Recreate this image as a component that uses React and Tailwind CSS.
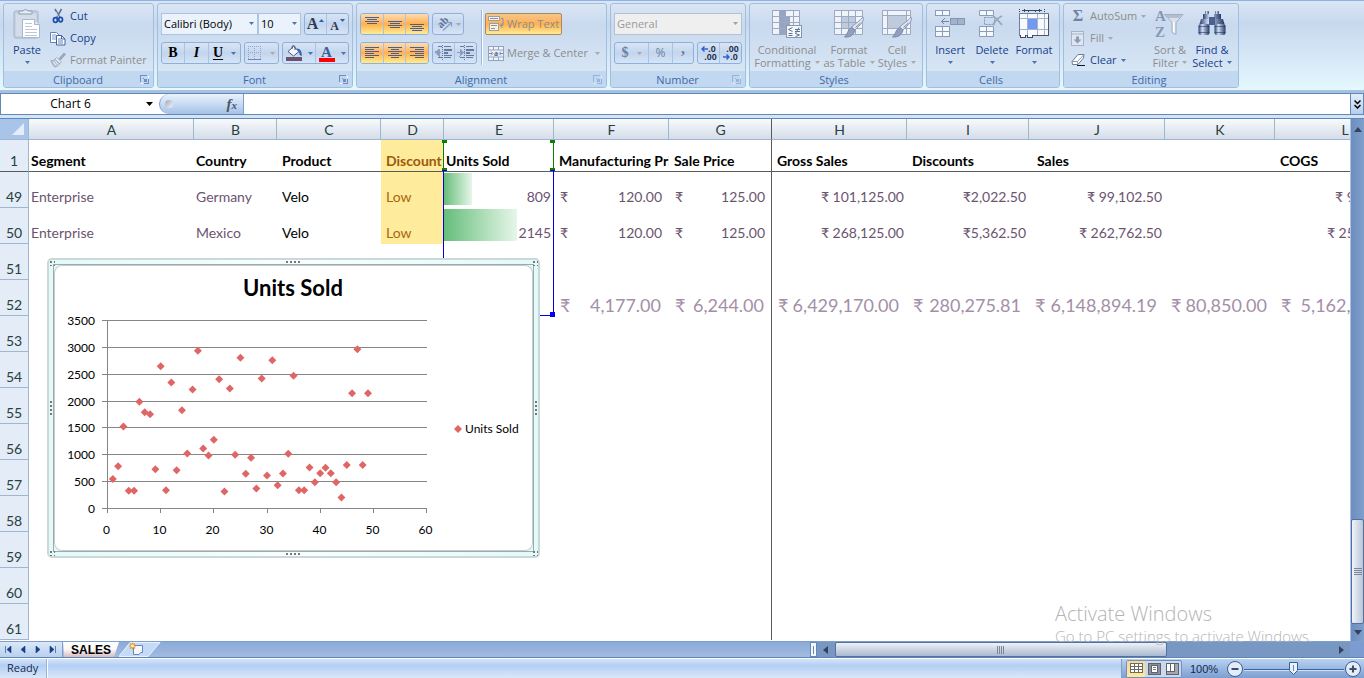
import React from "react";

const UI = "font-['Open_Sans','Noto_Sans',sans-serif]";
const SHEET = "font-['Lato','Noto_Sans',sans-serif]";
const SERIF = "font-['Liberation_Serif',serif]";

const BOX =
  "flex h-[22px] overflow-hidden rounded-[3px] border border-[#8eb0dc] bg-linear-to-b from-[#d9e5f4] via-[#c3d5ed] to-[#d6e4f6]";
const SEG = "flex items-center justify-center border-l border-[#a9c3e6] first:border-l-0";
const HOT = "bg-linear-to-b from-[#fddcae] via-[#ffb04e] to-[#ffec92]";

function Arrow({ className = "text-[#4a73b5]" }) {
  return (
    <svg width="5" height="3" viewBox="0 0 5 3" className={className} aria-hidden="true">
      <path d="M0 0h5L2.5 3z" fill="currentColor" />
    </svg>
  );
}

/* ---------- Icons ---------- */

function PasteIcon() {
  return (
    <svg width="28" height="32" viewBox="0 0 28 32">
      <rect x="1" y="3" width="24" height="27" rx="2" fill="#c6d1e1" stroke="#a3b2c8" />
      <rect x="3" y="6" width="20" height="22" fill="#d3dce9" />
      <path d="M6 6V3h4a3 3 0 0 1 5 0h4v3z" fill="#e6ebf3" stroke="#8f9db4" />
      <path d="M9.500 11.500h12l5 5v13h-17z" fill="#fff" stroke="#a9b7cd" />
      <path d="M21.500 11.500v5h5" fill="#dde4ef" stroke="#a9b7cd" />
      <path d="M12 15.500h7M12 18.500h7M12 21.500h12M12 24.500h12M12 27.500h12" stroke="#bcc7d8" />
    </svg>
  );
}

function CutIcon() {
  return (
    <svg width="16" height="16" viewBox="0 0 16 16">
      <path d="M5 1l5 9M11.500 1L6.500 10" stroke="#5d7396" strokeWidth="1.600" fill="none" />
      <path d="M6 4l2.500 5" stroke="#fff" strokeWidth=".6" />
      <ellipse cx="5.400" cy="12" rx="2" ry="2.400" fill="none" stroke="#1f4fae" strokeWidth="1.700" />
      <ellipse cx="10.600" cy="11.600" rx="1.900" ry="2.300" fill="none" stroke="#1f4fae" strokeWidth="1.700" />
    </svg>
  );
}

function CopyIcon() {
  return (
    <svg width="16" height="16" viewBox="0 0 16 16">
      <path d="M.5 2.500h6l3 3v7h-9z" fill="#fff" stroke="#5f83bd" />
      <path d="M2 5h4M2 7h5M2 9h4" stroke="#7b9cd0" />
      <path d="M6.500 5.500h5l3.500 3.500v6h-8.500z" fill="#fff" stroke="#3e64a6" />
      <path d="M11.500 5.500v3.500h3.500" fill="none" stroke="#3e64a6" />
      <path d="M8 9h3M8 11h5M8 13h5" stroke="#5f83bd" />
    </svg>
  );
}

function PainterIcon() {
  return (
    <svg width="16" height="16" viewBox="0 0 16 16">
      <path d="M15 1.500L9.500 7.500" stroke="#9aa7bc" strokeWidth="2.600" />
      <path d="M6.500 5.500l5 4.500-2 2-5-4.500z" fill="#e9edf3" stroke="#a3b0c4" />
      <path d="M1 8.500c2 .5 3-.5 4-1l4.500 4c-1 2-2.500 3-4.500 3.500-2-1-3-3.500-4-6.500z" fill="#b7c3d6" stroke="#98a6bc" />
      <path d="M3 9.500l3 4M5 8.500l3 4" stroke="#eef2f8" />
    </svg>
  );
}

function BorderIcon() {
  return (
    <svg width="14" height="14" viewBox="0 0 14 14" shapeRendering="crispEdges">
      <path d="M.5 0v13M6.500 0v13M12.500 0v13M0 .5h13M0 6.500h13" stroke="#93a6c6" strokeDasharray="1 1" />
      <path d="M0 13.500h13" stroke="#7589ad" />
    </svg>
  );
}

function FillIcon() {
  return (
    <svg width="18" height="16" viewBox="0 0 18 16">
      <path d="M2 6.500L7.500 1.500l5.500 5-5.500 4.500z" fill="#f3f7fc" stroke="#44597f" />
      <path d="M6 4V1.500q1.500-2 3 0V5" fill="none" stroke="#44597f" />
      <path d="M10.500 3.500q5-.5 5.500 7-2 .5-2.500-1 0-3-3-6z" fill="#2f62b8" />
      <rect x="0" y="12" width="16" height="4" fill="#6d5270" />
    </svg>
  );
}

function AlignIcon({ kind }) {
  const rows = {
    top: { y: 0, x: [1, 3, 1, 3], w: [14, 10, 14, 10] },
    mid: { y: 4, x: [1, 3, 1, 3], w: [14, 10, 14, 10] },
    bot: { y: 7, x: [1, 3, 1, 3], w: [14, 10, 14, 10] },
    left: { y: 1, x: [1, 1, 1, 1, 1, 1], w: [14, 9, 14, 9, 14, 9] },
    center: { y: 1, x: [1, 4, 1, 4, 1, 4], w: [14, 8, 14, 8, 14, 8] },
    right: { y: 1, x: [1, 6, 1, 6, 1, 6], w: [14, 9, 14, 9, 14, 9] },
  }[kind];
  return (
    <svg width="16" height="14" viewBox="0 0 16 14" shapeRendering="crispEdges">
      {rows.w.map((w, i) => (
        <rect key={i} x={rows.x[i]} y={rows.y + i * 2} width={w} height="1" fill="#4b5f8c" />
      ))}
    </svg>
  );
}

function OrientIcon() {
  return (
    <svg width="18" height="18" viewBox="0 0 18 18">
      <text x="3" y="13" transform="rotate(-45 5 11)" fontSize="11" fontFamily="Liberation Serif" fontWeight="bold" fill="#5f7399">
        ab
      </text>
      <path d="M7 15.500L15.500 7.500M11.500 7.500h4v4" stroke="#8b9dbf" strokeWidth="1.200" fill="none" />
    </svg>
  );
}

function IndentIcon({ flip }) {
  return (
    <svg width="18" height="16" viewBox="0 0 18 16" shapeRendering="crispEdges">
      <g fill="#65799f">
        <rect x="3" y="1" width="4" height="1" />
        <rect x="9" y="1" width="7" height="1" />
        <rect x="9" y="4" width="8" height="2" />
        <rect x="9" y="7" width="4" height="2" />
        <rect x="9" y="10" width="8" height="1" />
        <rect x="3" y="12" width="4" height="1" />
        <rect x="9" y="12" width="7" height="1" />
      </g>
      <path d="M7.500 0v15" stroke="#65799f" strokeDasharray="1 1" />
      <path d={flip ? "M0 7.500h5M3 4.500l4 3-4 3z" : "M6 7.500h-4M4 4.500l-4 3 4 3z"} fill="#8e9dba" stroke="#8e9dba" />
    </svg>
  );
}

function WrapIcon() {
  return (
    <svg width="16" height="16" viewBox="0 0 16 16">
      <rect x=".5" y=".5" width="11" height="4" fill="#f5f2ee" stroke="#a39d99" />
      <path d="M2 2.500h8" stroke="#8791a8" />
      <rect x="1.500" y="7.500" width="9" height="7" fill="#f5f2ee" stroke="#a39d99" />
      <path d="M3 9.500h6M3 12.500h4" stroke="#8791a8" />
      <path d="M13 2.500h2v7h-2M14.500 7.500l-2.500 2 2.500 2.500" fill="none" stroke="#8791a8" />
    </svg>
  );
}

function MergeIcon() {
  return (
    <svg width="16" height="15" viewBox="0 0 16 15">
      <rect x=".5" y=".5" width="15" height="14" fill="#f0f4fa" stroke="#93a3bf" />
      <path d="M.5 4h15M.5 11h15M5.500 .5v3.500M10.500 .5v3.500M5.500 11v3.500M10.500 11v3.500" stroke="#93a3bf" />
      <path d="M1 7.500h3M12 7.500h3M3 5.500l2 2-2 2M13 5.500l-2 2 2 2" stroke="#7287ad" fill="none" />
      <text x="8" y="10" textAnchor="middle" fontSize="8" fontWeight="bold" fontFamily="Liberation Serif" fill="#4c6088">
        a
      </text>
    </svg>
  );
}

function CondIcon() {
  return (
    <svg width="32" height="32" viewBox="0 0 32 32">
      <path d="M1.500 2.500h27v24h-27z" fill="#f0f4fa" stroke="#97a7c1" />
      <path d="M8 3h6v5H8zM8 8h11v6H8zM8 14h11v6H8zM8 20h6v6H8z" fill="#94a4c1" />
      <path d="M8.500 3v24M14.500 3v24M22.500 3v24M2 8.500h26M2 14.500h26M2 20.500h26" stroke="#9caac3" fill="none" />
      <rect x="15.500" y="17.500" width="15" height="12" fill="#f5f7fb" stroke="#8495b4" />
      <path d="M21.500 19.500l-4 2 4 2M17.500 25.500h4M17.500 27.500h4M24 21.500h5M24 23.500h5M28 19.500l-3.500 6M24.500 25.500l4 1.500-4 1.500" stroke="#5d7299" fill="none" />
    </svg>
  );
}

function Brush() {
  return (
    <g>
      <path d="M30 9c2 4-3 8-8 13l-3.500-3C23 15 27 13 30 9z" fill="#dfe5ee" stroke="#8b9ab4" />
      <path d="M18.500 19.500l3.500 3c-1.500 5-5.500 7-10.500 6.500 3-2 3-7.500 7-9.500z" fill="#8f9fbc" stroke="#7c8dab" />
      <path d="M27.500 15l-5 4.500" stroke="#7487a8" />
    </g>
  );
}

function TableIcon() {
  return (
    <svg width="32" height="32" viewBox="0 0 32 32">
      <path d="M1.500 2.500h28v24h-28z" fill="#f0f4fa" stroke="#9caac3" />
      <path d="M9 8h14v12H9z" fill="#bfcadc" />
      <path d="M8.500 3v24M15.500 3v24M22.500 3v24M2 8.500h28M2 14.500h28M2 20.500h28" stroke="#9caac3" fill="none" />
      <Brush />
    </svg>
  );
}

function CellStyleIcon() {
  return (
    <svg width="32" height="32" viewBox="0 0 32 32">
      <path d="M1.500 2.500h28v24h-28z" fill="#f0f4fa" stroke="#9caac3" />
      <path d="M6 7h19v14H6z" fill="#bfcadc" />
      <path d="M6.500 3v24M25.500 3v24M2 7.500h28M2 20.500h28" stroke="#9caac3" fill="none" />
      <Brush />
    </svg>
  );
}

function InsertIcon() {
  return (
    <svg width="32" height="32" viewBox="0 0 32 32" shapeRendering="crispEdges">
      <path d="M1.500 2.500h14v5h-14zM8.500 2.500v5M1.500 18.500h14v10h-14zM8.500 18.500v10M1.500 23.500h14" fill="#f5f8fc" stroke="#8a9cba" />
      <path d="M16.500 10.500h14v6h-14zM23.500 10.500v6" fill="#a3b2cb" stroke="#8596b3" />
      <path d="M7 13.500h8M10.500 10.500l-3 3 3 3" fill="none" stroke="#7386aa" />
    </svg>
  );
}

function DeleteIcon() {
  return (
    <svg width="32" height="32" viewBox="0 0 32 32">
      <path d="M3.500 2.500h14v5h-14zM10.500 2.500v5M3.500 18.500h14v10h-14zM10.500 18.500v10M3.500 23.500h14" fill="#f5f8fc" stroke="#8a9cba" />
      <path d="M8.500 9.500h10v7h-10z" fill="none" stroke="#8596b3" strokeDasharray="2 1" />
      <path d="M17 8c3 2 6 5 9 9M26 8c-4 2-7 5-9 9" fill="none" stroke="#98a8c2" strokeWidth="1.800" />
    </svg>
  );
}

function FormatIcon() {
  return (
    <svg width="32" height="32" viewBox="0 0 32 32" shapeRendering="crispEdges">
      <path d="M1.500 1v4M26.500 1v4" stroke="#3a4867" strokeDasharray="1 1" />
      <path d="M4 2.500h20M6 1v3M21 1v3M10 2v2M17 2v2" stroke="#3a4867" />
      <path d="M1.500 5.500h29v22h-29z" fill="#f8fafd" stroke="#6f809d" />
      <path d="M30.500 7v21M9 27.500h22" stroke="#47566f" />
      <path d="M9.500 6v21M19.500 6v21M26.500 6v21M2 10.500h28M2 21.500h28" stroke="#a5b2c8" fill="none" />
      <path d="M10 11h9v10h-9z" fill="#6f9af0" />
      <path d="M2.500 27v2h5v-2M9.500 27v2h5v-2" stroke="#3a4867" fill="#fff" />
    </svg>
  );
}

function FillDownIcon() {
  return (
    <svg width="14" height="15" viewBox="0 0 14 15">
      <rect x=".5" y=".5" width="12" height="14" fill="#dfe6f0" stroke="#a6b3c8" />
      <path d="M1 3h11" stroke="#a6b3c8" />
      <path d="M5 5.500h3v3h2.500l-4 4-4-4H5z" fill="#8b9ab6" />
    </svg>
  );
}

function ClearIcon() {
  return (
    <svg width="15" height="14" viewBox="0 0 15 14">
      <path d="M7 1.500h6l-.5 3.500-5.500 6.500H1.500L1 8.500z" fill="#fff" stroke="#6a7c9b" />
      <path d="M1 8.500h5.500L13 1.500M6.500 8.500l.5 3" fill="none" stroke="#8c9ab3" />
      <path d="M6 12.500h8" stroke="#101828" />
    </svg>
  );
}

function SortIcon() {
  return (
    <svg width="32" height="32" viewBox="0 0 32 32">
      <text x="1" y="13" fontSize="15" fontWeight="bold" fontFamily="Liberation Serif" fill="#8797b5">
        A
      </text>
      <text x="1" y="29" fontSize="15" fontWeight="bold" fontFamily="Liberation Serif" fill="#8797b5">
        Z
      </text>
      <path d="M10.500 6.500h18.500l-7 8v12l-4-2v-10z" fill="#dbe1ea" stroke="#a1adc2" />
      <path d="M12 7h16l-3 3H14z" fill="#b3bfd1" />
      <path d="M19 14v10l1.500 1V14z" fill="#fff" />
    </svg>
  );
}

function FindIcon() {
  return (
    <svg width="32" height="32" viewBox="0 0 32 32">
      <defs>
        <linearGradient id="bino" x1="0" x2="1">
          <stop offset="0" stopColor="#2b4170" />
          <stop offset=".35" stopColor="#cfdcf3" />
          <stop offset="1" stopColor="#263a68" />
        </linearGradient>
      </defs>
      <rect x="9" y="3" width="4" height="3" rx="1" fill="url(#bino)" />
      <rect x="19" y="3" width="4" height="3" rx="1" fill="url(#bino)" />
      <path d="M7 6h7v5H7zM18 6h7v5h-7z" fill="url(#bino)" />
      <path d="M5 11h9l1 5H3.500zM18 11h9l1.500 5H17z" fill="url(#bino)" />
      <rect x="13" y="9" width="6" height="8" fill="#4b6192" />
      <rect x="2.500" y="16" width="11" height="11" rx="2" fill="url(#bino)" />
      <rect x="18.500" y="16" width="11" height="11" rx="2" fill="url(#bino)" />
      <path d="M2.500 18.500h11M18.500 18.500h11M2.500 24.500h11M18.500 24.500h11" stroke="#1f3260" opacity=".55" />
    </svg>
  );
}

function Launcher({ dim }) {
  return (
    <svg width="9" height="9" viewBox="0 0 9 9" shapeRendering="crispEdges" className={dim ? "opacity-50" : ""}>
      <path d="M.5 6.500v-6h6" fill="none" stroke="#6f8fc0" />
      <path d="M4 8.500h4.500V4M3.500 3.500l4 4M4 4h2v2H4z" fill="none" stroke="#6f8fc0" />
      <path d="M1 8.500h2M8.500 1v2" stroke="#fff" />
    </svg>
  );
}

/* ---------- Ribbon ---------- */

function Group({ title, width, launcher, children }) {
  return (
    <section
      aria-label={title}
      className={`${width} flex h-[85px] shrink-0 flex-col overflow-hidden rounded-[3px] border border-[#a0bfdf] bg-linear-to-b from-[#dbe6f4] via-[#c9d9ee] via-25% to-[#dceaf7]`}
    >
      <div className="flex h-[67px]">{children}</div>
      <div className="flex h-4 items-center bg-[#c1d8f0] pr-1">
        <h2 className={`flex-1 pt-px text-center text-[11px] leading-[15px] text-[#3e6aaa] ${launcher ? "pl-3" : ""}`}>
          {title}
        </h2>
        {launcher && (
          <button aria-label={`${title} options`}>
            <Launcher dim={launcher === "dim"} />
          </button>
        )}
      </div>
    </section>
  );
}

function BigButton({ icon, lines, arrow = true, dim, width = "w-[42px]" }) {
  const color = dim ? "text-[#8d8d8d]" : "text-[#15428b]";
  const arrowColor = dim ? "text-[#aaa9a9]" : "text-[#4a73b5]";
  const last = lines.length - 1;
  return (
    <button className={`${width} flex shrink-0 flex-col items-center pt-1 ${color}`}>
      {icon}
      <span className="mt-[3px] text-[11px] leading-[13px] whitespace-nowrap">{lines[0]}</span>
      <span className="flex h-[13px] items-center gap-1 text-[11px] leading-[13px] whitespace-nowrap">
        {last > 0 && lines[1]}
        {arrow && <Arrow className={arrowColor} />}
      </span>
    </button>
  );
}

function SmallButton({ icon, label, dim, arrow }) {
  return (
    <button
      className={`flex h-[22px] items-center gap-1 text-[11px] whitespace-nowrap ${dim ? "text-[#8d8d8d]" : "text-[#15428b]"}`}
    >
      <span className="flex w-4 justify-center">{icon}</span>
      {label}
      {arrow && <Arrow className={dim ? "text-[#aaa9a9]" : "text-[#4a73b5]"} />}
    </button>
  );
}

function Combo({ label, value, width, dim }) {
  return (
    <div className={`${width} relative flex`}>
      <select
        aria-label={label}
        className={`h-[22px] w-full appearance-none border pl-[2px] text-[11px] outline-none ${
          dim ? "border-[#b4c1d3] bg-[#efefef] text-[#9a9a9a]" : "border-[#abc4e4] bg-[#eaf2fb] text-black"
        }`}
      >
        <option>{value}</option>
      </select>
      <span className="pointer-events-none absolute top-[9px] right-1">
        <Arrow className={dim ? "text-[#a0a0a0]" : "text-[#4a73b5]"} />
      </span>
    </div>
  );
}

function Ribbon() {
  return (
    <header className="flex h-[93px] gap-[3px] overflow-hidden border-t border-b-[3px] border-t-[#8db2e3] border-b-[#a9c1de] bg-linear-to-b from-[#dbe6f5] via-[#c7d8ee] via-25% to-[#e4f8fe] pt-[2px] pl-[3px]">
      <Group title="Clipboard" width="w-[151px]" launcher="on">
        <BigButton icon={<PasteIcon />} lines={["Paste"]} width="w-[46px]" />
        <div className="flex flex-col pt-px">
          <SmallButton icon={<CutIcon />} label="Cut" />
          <SmallButton icon={<CopyIcon />} label="Copy" />
          <SmallButton icon={<PainterIcon />} label="Format Painter" dim />
        </div>
      </Group>

      <Group title="Font" width="w-[196px]" launcher="on">
        <div className="flex flex-1 flex-col gap-[7px] px-[3px] pt-[9px]">
          <div className="flex">
            <Combo label="Font" value="Calibri (Body)" width="w-[97px]" />
            <Combo label="Font size" value="10" width="w-[43px]" />
            <div className={`${BOX} ml-[3px] flex-1`}>
              <button aria-label="Grow font" className={`${SEG} flex-1 gap-px`}>
                <span className={`${SERIF} text-base leading-5 font-bold text-[#2c3a52]`}>A</span>
                <svg width="5" height="3" viewBox="0 0 5 3" className="mb-2">
                  <path d="M0 3h5L2.500 0z" fill="#2f5fb4" />
                </svg>
              </button>
              <button aria-label="Shrink font" className={`${SEG} flex-1 gap-px`}>
                <span className={`${SERIF} pt-1 text-xs font-bold text-[#2c3a52]`}>A</span>
                <svg width="5" height="3" viewBox="0 0 5 3" className="mb-2">
                  <path d="M0 0h5L2.500 3z" fill="#2f5fb4" />
                </svg>
              </button>
            </div>
          </div>
          <div className="flex gap-[3px]">
            <div className={`${BOX} w-[80px]`}>
              <button className={`${SEG} ${SERIF} w-[22px] text-sm font-bold`}>B</button>
              <button className={`${SEG} ${SERIF} w-6 text-sm font-bold italic`}>I</button>
              <button className={`${SEG} ${SERIF} flex-1 gap-2 text-sm font-bold`}>
                <span className="underline underline-offset-2">U</span>
                <Arrow />
              </button>
            </div>
            <button aria-label="Borders" className={`${BOX} w-[35px] items-center justify-center gap-2`}>
              <BorderIcon />
              <Arrow className="text-[#aaa9a9]" />
            </button>
            <div className={`${BOX} flex-1`}>
              <button aria-label="Fill color" className={`${SEG} flex-1 gap-1`}>
                <FillIcon />
                <Arrow />
              </button>
              <button aria-label="Font color" className={`${SEG} flex-1 gap-[6px]`}>
                <span className={`${SERIF} h-[17px] w-4 border-b-4 border-[#ff0000] text-center text-[15px] leading-[14px] font-bold text-[#3b5f9d]`}>
                  A
                </span>
                <Arrow />
              </button>
            </div>
          </div>
        </div>
      </Group>

      <Group title="Alignment" width="w-[251px]" launcher="dim">
        <div className="flex flex-col gap-[7px] pt-[9px] pl-[3px]">
          <div className="flex gap-[3px]">
            <div className={`${BOX} w-[69px]`}>
              {["top", "mid", "bot"].map((k) => (
                <button key={k} aria-label={`Align ${k}`} className={`${SEG} ${HOT} flex-1`}>
                  <AlignIcon kind={k} />
                </button>
              ))}
            </div>
            <button aria-label="Orientation" className={`${BOX} w-8 items-center justify-center gap-[2px]`}>
              <OrientIcon />
              <Arrow className="text-[#aaa9a9]" />
            </button>
          </div>
          <div className="flex gap-[3px]">
            <div className={`${BOX} w-[69px]`}>
              {["left", "center", "right"].map((k) => (
                <button key={k} aria-label={`Align ${k}`} className={`${SEG} ${HOT} flex-1`}>
                  <AlignIcon kind={k} />
                </button>
              ))}
            </div>
            <div className={`${BOX} w-[45px]`}>
              <button aria-label="Decrease indent" className={`${SEG} flex-1`}>
                <IndentIcon />
              </button>
              <button aria-label="Increase indent" className={`${SEG} flex-1`}>
                <IndentIcon flip />
              </button>
            </div>
          </div>
        </div>
        <div className="mt-[6px] mr-[2px] ml-1 h-[55px] w-px border-r border-white bg-[#9dbbe0] pr-px" />
        <div className="flex flex-col items-start gap-[7px] pt-[9px]">
          <button className="flex h-[22px] w-[77px] items-center gap-[3px] rounded-[2px] border border-[#a98a5c] bg-linear-to-b from-[#f5c58b] via-[#ffb04e] to-[#ffec92] pl-[2px] text-[11px] whitespace-nowrap text-[#8d8d8d]">
            <WrapIcon />
            Wrap Text
          </button>
          <button className="flex h-[22px] items-center gap-[3px] pl-[3px] text-[11px] whitespace-nowrap text-[#8d8d8d]">
            <MergeIcon />
            <span className="pr-1">Merge &amp; Center</span>
            <Arrow className="text-[#aaa9a9]" />
          </button>
        </div>
      </Group>

      <Group title="Number" width="w-[136px]" launcher="dim">
        <div className="flex flex-1 flex-col gap-[7px] px-[3px] pt-[9px]">
          <Combo label="Number format" value="General" width="w-full" dim />
          <div className="flex gap-[3px]">
            <div className={`${BOX} w-[80px] text-[#6b7fa5]`}>
              <button aria-label="Accounting format" className={`${SEG} w-[33px] gap-2`}>
                <span className={`${SERIF} text-sm font-bold`}>$</span>
                <Arrow className="text-[#aaa9a9]" />
              </button>
              <button className={`${SEG} flex-1 text-xs`}>%</button>
              <button aria-label="Comma style" className={`${SEG} ${SERIF} w-[21px] pb-2 text-base leading-3 font-bold`}>
                ,
              </button>
            </div>
            <div className={`${BOX} flex-1 font-['Liberation_Sans',sans-serif] text-[9px] leading-[8px] font-bold text-[#1f2c47]`}>
              <button aria-label="Increase decimal" className={`${SEG} flex-1 flex-col`}>
                <span className="flex items-center">
                  <svg width="7" height="6" viewBox="0 0 7 6">
                    <path d="M7 3H2M3.500 .5L1 3l2.500 2.500" fill="none" stroke="#2f62d0" strokeWidth="1.500" />
                  </svg>
                  .0
                </span>
                <span className="pl-1">.00</span>
              </button>
              <button aria-label="Decrease decimal" className={`${SEG} flex-1 flex-col`}>
                <span className="pl-1">.00</span>
                <span className="flex items-center">
                  <svg width="7" height="6" viewBox="0 0 7 6">
                    <path d="M0 3h5M3.500 .5L6 3 3.500 5.500" fill="none" stroke="#2f62d0" strokeWidth="1.500" />
                  </svg>
                  .0
                </span>
              </button>
            </div>
          </div>
        </div>
      </Group>

      <Group title="Styles" width="w-[174px]">
        <BigButton icon={<CondIcon />} lines={["Conditional", "Formatting"]} dim width="w-[74px]" />
        <BigButton icon={<TableIcon />} lines={["Format", "as Table"]} dim width="w-[50px]" />
        <BigButton icon={<CellStyleIcon />} lines={["Cell", "Styles"]} dim width="w-[46px]" />
      </Group>

      <Group title="Cells" width="w-[134px]">
        <div className="flex flex-1 pl-[2px]">
          <BigButton icon={<InsertIcon />} lines={["Insert"]} />
          <BigButton icon={<DeleteIcon />} lines={["Delete"]} />
          <BigButton icon={<FormatIcon />} lines={["Format"]} />
        </div>
      </Group>

      <Group title="Editing" width="w-[176px]">
        <div className="flex w-[85px] flex-col items-start pt-px pl-[6px]">
          <SmallButton
            icon={<span className={`${SERIF} text-base leading-4 font-bold text-[#6f82a6]`}>Σ</span>}
            label="AutoSum"
            dim
            arrow
          />
          <SmallButton icon={<FillDownIcon />} label="Fill" dim arrow />
          <SmallButton icon={<ClearIcon />} label="Clear" arrow />
        </div>
        <BigButton icon={<SortIcon />} lines={["Sort &", "Filter"]} dim />
        <BigButton icon={<FindIcon />} lines={["Find &", "Select"]} />
      </Group>
    </header>
  );
}

/* ---------- Formula bar ---------- */

function FormulaBar() {
  return (
    <div className="flex h-[26px] border-b border-[#5f8ab8] bg-[#d5e4f5] pb-[3px] text-black">
      <div className="flex flex-1 border-y border-l border-[#5f8ab8] bg-white">
        <div className="flex w-[158px] items-center pr-[6px]">
          <input aria-label="Name box" defaultValue="Chart 6" className="min-w-0 flex-1 pr-[6px] text-center text-xs outline-none" />
          <button aria-label="Names">
            <svg width="7" height="4" viewBox="0 0 7 4">
              <path d="M0 0h7L3.500 4z" fill="#000" />
            </svg>
          </button>
        </div>
        <div className="flex w-[85px] items-center justify-between rounded-l-full border-r border-l border-[#7d9fcb] bg-linear-to-b from-[#eaf2fc] via-[#c9dbf2] to-[#a5c1e6] pr-[6px] pl-[5px]">
          <span className="size-2 rounded-full bg-linear-to-br from-[#9fa9b8] to-[#f4f7fb]" />
          <button aria-label="Insert function" className={`${SERIF} text-[15px] leading-4 font-bold text-[#4b5568] italic`}>
            f<span className="text-[11px]">x</span>
          </button>
        </div>
        <input aria-label="Formula" className="min-w-0 flex-1 px-1 text-xs outline-none" />
      </div>
      <button
        aria-label="Expand formula bar"
        className="flex w-[14px] items-center justify-center border border-[#5f8ab8] bg-linear-to-b from-[#e4eefb] to-[#b7cdec]"
      >
        <svg width="7" height="9" viewBox="0 0 7 9">
          <path d="M.5 .5l3 3 3-3M.5 5l3 3 3-3" fill="none" stroke="#000" strokeWidth="1.500" />
        </svg>
      </button>
    </div>
  );
}

/* ---------- Chart ---------- */

const UNITS = [
  549, 788, 1527, 330, 330, 1986, 1793, 1756, 732, 2650, 341, 2346, 714, 1831, 1024, 2215, 2935, 1117, 987, 1278, 2408,
  316, 2234, 1000, 2805, 646, 943, 372, 2420, 614, 2762, 434, 652, 1018, 2470, 341, 341, 763, 490, 658, 757, 658, 490,
  205, 809, 2145, 2966, 809, 2145,
];

function Diamond({ x, y }) {
  return <path d={`M${x - 4} ${y}L${x} ${y - 4}L${x + 4} ${y}L${x} ${y + 4}Z`} fill="#e06666" />;
}

function Dots({ className }) {
  return <span className={`absolute ${className}`} />;
}

function Chart() {
  const px = (n) => 54.5 + (n * 319) / 60;
  const py = (v) => 244.5 - (v * 188) / 3500;
  const ticks = [0, 500, 1000, 1500, 2000, 2500, 3000, 3500];
  const corner = "size-[6px] bg-[radial-gradient(#777_1px,transparent_1px)] bg-size-[4px_4px]";
  return (
    <figure
      aria-label="Units Sold chart"
      className="absolute top-[139px] left-[47px] h-[300px] w-[493px] rounded-[5px] border-2 border-[#cbd8d9] bg-linear-to-r from-[#e2fafa] via-[#f8fefe] to-[#e2fafa] p-1"
    >
      <Dots className={`${corner} top-0 left-0`} />
      <Dots className={`${corner} top-0 right-0`} />
      <Dots className={`${corner} bottom-0 left-0`} />
      <Dots className={`${corner} right-0 bottom-0`} />
      <Dots className="top-px left-[237px] h-[2px] w-[15px] bg-[repeating-linear-gradient(90deg,#777_0_2px,transparent_2px_4px)]" />
      <Dots className="bottom-px left-[237px] h-[2px] w-[15px] bg-[repeating-linear-gradient(90deg,#777_0_2px,transparent_2px_4px)]" />
      <Dots className="top-[141px] left-px h-[15px] w-[2px] bg-[repeating-linear-gradient(180deg,#777_0_2px,transparent_2px_4px)]" />
      <Dots className="top-[141px] right-px h-[15px] w-[2px] bg-[repeating-linear-gradient(180deg,#777_0_2px,transparent_2px_4px)]" />
      <div className="h-full border border-[#a3a9a9]">
        <svg
          width="479"
          height="286"
          viewBox="1 1 479 286"
          className={`${SHEET} size-full rounded-lg bg-white ring-1 ring-[#c6cccc] ring-inset`}
        >
          <text x="240" y="32" textAnchor="middle" fontSize="22" fontWeight="bold" fill="#000">
            Units Sold
          </text>
          {ticks.map((t) => {
            const y = Math.floor(py(t)) + 0.5;
            return (
              <g key={t}>
                <path d={`M49 ${y}H374`} stroke="#868686" />
                <text x="42" y={y + 4} textAnchor="end" fontSize="12" fill="#000">
                  {t}
                </text>
              </g>
            );
          })}
          <path d="M54.500 56V249" stroke="#868686" />
          {[0, 10, 20, 30, 40, 50, 60].map((t) => {
            const x = Math.floor(px(t)) + 0.5;
            return (
              <g key={t}>
                <path d={`M${x} 245v4`} stroke="#868686" />
                <text x={x - 1} y="270" textAnchor="middle" fontSize="12" fill="#000">
                  {t}
                </text>
              </g>
            );
          })}
          {UNITS.map((v, i) => (
            <Diamond key={i} x={px(i + 1)} y={py(v)} />
          ))}
          <Diamond x={405} y={165} />
          <text x="412" y="169" fontSize="12" fill="#000">
            Units Sold
          </text>
        </svg>
      </div>
    </figure>
  );
}

/* ---------- Sheet ---------- */

const COLS = [
  { id: "A", w: "w-[165px]" },
  { id: "B", w: "w-[83px]" },
  { id: "C", w: "w-[104px]" },
  { id: "D", w: "w-[63px]" },
  { id: "E", w: "w-[110px]" },
  { id: "F", w: "w-[115px]" },
  { id: "G", w: "w-[103px]" },
  { id: "H", w: "w-[135px]" },
  { id: "I", w: "w-[122px]" },
  { id: "J", w: "w-[136px]" },
  { id: "K", w: "w-[110px]" },
  { id: "L", w: "w-[140px]" },
];

const TITLES = [
  ["Segment", "pl-[2px]"],
  ["Country", "pl-[2px]"],
  ["Product", "pl-[5px]"],
  ["Discount", "pl-[5px] bg-[#ffeb9c] text-[#9c5a0a]"],
  ["Units Sold", "pl-[2px]"],
  ["Manufacturing Price", "pl-[5px]"],
  ["Sale Price", "pl-[5px] border-r border-r-[#5a5a5a]"],
  ["Gross Sales", "pl-[5px]"],
  ["Discounts", "pl-[5px]"],
  ["Sales", "pl-2"],
  ["", ""],
  ["COGS", "pl-[5px]"],
];

const RECORDS = {
  49: { country: "Germany", units: 809, gross: "₹ 101,125.00", disc: "₹2,022.50", sales: "₹ 99,102.50", cogs: "₹ 97,080.00" },
  50: { country: "Mexico", units: 2145, gross: "₹ 268,125.00", disc: "₹5,362.50", sales: "₹ 262,762.50", cogs: "₹ 257,400.00" },
};

const TOTALS = ["4,177.00", "6,244.00", "6,429,170.00", "280,275.81", "6,148,894.19", "80,850.00", "5,162,605.00"];

const CELL = "h-9 p-0 pb-[2px] align-bottom leading-[18px] whitespace-nowrap overflow-hidden";
const FREEZE = "border-r border-r-[#5a5a5a]";

function Money({ children, pad = "pr-[7px]" }) {
  return (
    <span className={`flex justify-between pl-[6px] ${pad}`}>
      <span>₹</span>
      <span>{children}</span>
    </span>
  );
}

function RecordCells({ r }) {
  return (
    <>
      <td className={`${CELL} pl-[2px]`}>Enterprise</td>
      <td className={`${CELL} pl-[2px]`}>{r.country}</td>
      <td className={`${CELL} pl-[5px] text-black`}>Velo</td>
      <td className={`${CELL} bg-[#ffeb9c] pl-[5px] text-[#a8660f]`}>Low</td>
      <td className={`${CELL} relative pr-[3px] text-right`}>
        <span
          className="absolute top-px left-0 h-8 bg-linear-to-r from-[#63be7b] to-[#e6f6ea]"
          style={{ width: `${Math.round((r.units * 100) / 3250)}%` }}
        />
        <span className="relative">{r.units}</span>
      </td>
      <td className={CELL}>
        <Money>120.00</Money>
      </td>
      <td className={`${CELL} ${FREEZE}`}>
        <Money pad="pr-[6px]">125.00</Money>
      </td>
      <td className={`${CELL} pr-[3px] text-right`}>{r.gross}</td>
      <td className={`${CELL} pr-[3px] text-right`}>{r.disc}</td>
      <td className={`${CELL} pr-[3px] text-right`}>{r.sales}</td>
      <td className={CELL} />
      <td className={`${CELL} pr-[5px] text-right`}>{r.cogs}</td>
    </>
  );
}

function TotalCells() {
  return (
    <>
      {["A", "B", "C", "D", "E"].map((c) => (
        <td key={c} className={CELL} />
      ))}
      {TOTALS.map((v, i) => (
        <td key={i} className={`${CELL} text-[18px] text-[#a48fa8] ${i === 1 ? FREEZE : ""}`}>
          <Money pad={i === 1 ? "pr-[7px]" : "pr-2"}>{v}</Money>
        </td>
      ))}
    </>
  );
}

function Sheet() {
  const rows = Array.from({ length: 13 }, (_, i) => 49 + i);
  return (
    <div className="flex">
      <main className={`${SHEET} relative min-w-0 flex-1 overflow-hidden bg-white pb-px`}>
        <table className="w-[1415px] table-fixed border-separate border-spacing-0 text-[14px] text-[#6b5470]">
          <colgroup>
            <col className="w-[29px]" />
            {COLS.map((c) => (
              <col key={c.id} className={c.w} />
            ))}
          </colgroup>
          <thead>
            <tr className="h-[21px] text-[#27413e]">
              <th className="border-r border-b border-[#9eb6ce] bg-[#a9c4e9] p-0">
                <svg width="12" height="12" viewBox="0 0 12 12" className="ml-3">
                  <path d="M12 0v12H0z" fill="#e3ecf8" />
                </svg>
              </th>
              {COLS.map((c) => (
                <th
                  key={c.id}
                  scope="col"
                  className={`h-[21px] border-r border-b border-[#9eb6ce] bg-linear-to-b from-[#f8fafc] to-[#d5dde9] p-0 pt-[2px] pl-px leading-[18px] font-normal ${
                    c.id === "G" ? "border-r-[#5a5a5a]" : ""
                  }`}
                >
                  {c.id}
                </th>
              ))}
            </tr>
          </thead>
          <tbody>
            <tr className="h-8 text-black">
              <th scope="row" className="border-r border-b border-r-[#9eb6ce] border-b-[#5a5a5a] bg-[#e4ecf7] p-0 pb-px align-bottom leading-[18px] font-normal text-[#27413e]">
                1
              </th>
              {TITLES.map(([t, cls], i) => (
                <td
                  key={i}
                  className={`h-8 overflow-hidden border-b border-b-[#5a5a5a] p-0 pb-px align-bottom leading-[18px] font-bold whitespace-nowrap ${cls}`}
                >
                  {t}
                </td>
              ))}
            </tr>
            {rows.map((n) => (
              <tr key={n} className="h-9">
                <th
                  scope="row"
                  className="h-9 border-r border-b border-[#9eb6ce] bg-[#e4ecf7] p-0 pb-px align-bottom leading-[18px] font-normal text-[#27413e]"
                >
                  {n}
                </th>
                {RECORDS[n] ? (
                  <RecordCells r={RECORDS[n]} />
                ) : n === 52 ? (
                  <TotalCells />
                ) : (
                  COLS.map((c) => <td key={c.id} className={c.id === "G" ? FREEZE : ""} />)
                )}
              </tr>
            ))}
          </tbody>
        </table>

        <div className="pointer-events-none absolute top-[52px] left-[443px] h-[145px] w-[111px] border-x border-b border-[#0000e0]">
          <span className="absolute -right-[2px] -bottom-[2px] size-[5px] bg-[#0000ff]" />
        </div>
        <div className="pointer-events-none absolute top-[21px] left-[443px] h-[31px] w-[111px] border-x border-[#0a7d0a]">
          <span className="absolute top-0 -left-[2px] h-[3px] w-[5px] bg-[#0a7d0a]" />
          <span className="absolute top-0 -right-[2px] h-[3px] w-[5px] bg-[#0a7d0a]" />
          <span className="absolute bottom-0 -left-[2px] h-[3px] w-[5px] border-b border-[#0000e0] bg-[#0a7d0a]" />
          <span className="absolute -right-[2px] bottom-0 h-[3px] w-[5px] border-b border-[#0000e0] bg-[#0a7d0a]" />
        </div>

        <Chart />
      </main>

      <div className="flex w-[14px] flex-col border-l border-[#a9c4e9] bg-linear-to-r from-[#6d8dbd] to-[#7f9fcc]">
        <button aria-label="Scroll up" className="flex h-5 items-center justify-center">
          <svg width="8" height="5" viewBox="0 0 8 5">
            <path d="M0 5h8L4 0z" fill="#35415f" />
          </svg>
        </button>
        <div className="flex-1" />
        <button
          aria-label="Vertical scroll thumb"
          className="flex h-[105px] items-center justify-center rounded-[2px] border border-[#55709f] bg-linear-to-r from-[#f1f4f8] to-[#b9c6da]"
        >
          <svg width="8" height="8" viewBox="0 0 8 8" shapeRendering="crispEdges">
            <path d="M0 .5h8M0 2.500h8M0 4.500h8M0 6.500h8" stroke="#7b869b" />
          </svg>
        </button>
        <button aria-label="Scroll down" className="flex h-[17px] items-center justify-center">
          <svg width="8" height="5" viewBox="0 0 8 5">
            <path d="M0 0h8L4 5z" fill="#35415f" />
          </svg>
        </button>
      </div>
    </div>
  );
}

/* ---------- Sheet tabs and status bar ---------- */

const NAV = [
  ["First sheet", "M1.500 0v7M7 0v7L3 3.500z"],
  ["Previous sheet", "M6 0v7L2 3.500z"],
  ["Next sheet", "M2 0v7l4-3.500z"],
  ["Last sheet", "M6.500 0v7M1 0v7l4-3.500z"],
];

function TabBar() {
  return (
    <div className="flex h-[17px] border-t border-b border-t-[#7d9fcb] border-b-[#5f84b6] bg-linear-to-b from-[#8aabd8] to-[#a3bbe0]">
      <div className="flex w-[63px] items-center justify-around border-r border-[#7d9fcb] bg-linear-to-b from-[#dbe8f8] to-[#b9d0ef] pr-[2px]">
        {NAV.map(([label, d]) => (
          <button key={label} aria-label={label}>
            <svg width="8" height="7" viewBox="0 0 8 7">
              <path d={d} fill="#153f86" stroke="#153f86" strokeWidth=".6" />
            </svg>
          </button>
        ))}
      </div>
      <button className="w-[56px] bg-linear-to-b from-white via-[#fbf7f8] to-[#d3bcc3] pt-px text-center font-['Liberation_Sans',sans-serif] text-xs leading-[14px] font-bold text-black [clip-path:polygon(0_0,100%_0,91%_100%,2%_100%)]">
        SALES
      </button>
      <button aria-label="Insert worksheet">
        <svg width="44" height="15" viewBox="0 0 44 15">
          <path d="M11 .5h30L29 14.500H0z" fill="#c4dbf8" stroke="#eaf3fd" />
          <path d="M14.500 3.500h9v7h-2l-1.500 2h-5.500z" fill="#f5f8fd" stroke="#6b86b8" />
          <path d="M13.500 .5v7M10 4h7M11 1.500l5 5M16 1.500l-5 5" stroke="#e79a2e" strokeWidth="1.200" />
          <circle cx="13.500" cy="4" r="1.400" fill="#fff3c0" />
        </svg>
      </button>
      <div className="flex-1" />
      <div className="flex w-[7px] items-center justify-center border border-[#5f8ab8] bg-[#f3f8fd]">
        <span className="h-2 w-px bg-[#5f8ab8]" />
      </div>
      <div className="flex w-[533px] bg-[#7997c3]">
        <button aria-label="Scroll left" className="flex w-[18px] items-center justify-center pr-px">
          <svg width="5" height="8" viewBox="0 0 5 8">
            <path d="M5 0v8L0 4z" fill="#35415f" />
          </svg>
        </button>
        <button
          aria-label="Horizontal scroll thumb"
          className="flex w-[332px] items-center justify-center rounded-[2px] border border-[#55709f] bg-linear-to-b from-[#eff2f6] via-[#cbd5e3] to-[#a9b9d0]"
        >
          <svg width="8" height="8" viewBox="0 0 8 8" shapeRendering="crispEdges">
            <path d="M.5 0v8M2.500 0v8M4.500 0v8M6.500 0v8" stroke="#7b869b" />
          </svg>
        </button>
        <button aria-label="Scroll right" className="flex flex-1 items-center justify-end pr-[6px]">
          <svg width="5" height="8" viewBox="0 0 5 8">
            <path d="M0 0v8l5-4z" fill="#35415f" />
          </svg>
        </button>
      </div>
      <div className="w-[14px] bg-[#7c9bd0]" />
    </div>
  );
}

function ZoomButton({ label, d }) {
  return (
    <button aria-label={label}>
      <svg width="18" height="18" viewBox="0 0 18 18">
        <circle cx="9" cy="9" r="7.500" fill="#e3edf9" stroke="#3d5f98" />
        <path d={d} stroke="#3f4e68" strokeWidth="2" />
      </svg>
    </button>
  );
}

function StatusBar() {
  return (
    <footer className="flex h-5 border-t border-white bg-linear-to-b from-[#d3e4fa] via-[#b3cff4] via-35% to-[#dbe8f8] text-[11px] leading-[18px] text-[#15284b]">
      <div className="w-[47px] border-r border-[#92b3e0] pl-[7px]">Ready</div>
      <div className="flex-1 border-l border-white" />
      <div className="flex w-[243px] items-center border-l border-[#7d9fcb] bg-linear-to-b from-[#b9d2f3] to-[#7d9fd0] pr-[2px] pl-1">
        <div className="flex h-[18px] rounded-[2px] border border-[#6d8fc2] bg-[#c9d9ee]">
          <button aria-label="Normal view" className="flex w-[18px] items-center justify-center bg-linear-to-b from-[#fbd696] to-[#ffe99b]">
            <svg width="13" height="11" viewBox="0 0 13 11" shapeRendering="crispEdges">
              <path d="M.5 .5h12v9H.5zM4.500 .5v9M8.500 .5v9M.5 3.500h12M.5 6.500h12" fill="#fff" stroke="#6d6a66" />
            </svg>
          </button>
          <button aria-label="Page layout view" className="flex w-[18px] items-center justify-center">
            <svg width="13" height="12" viewBox="0 0 13 12" shapeRendering="crispEdges">
              <path d="M.5 .5h12v11H.5z" fill="#8d9099" stroke="#5f636d" />
              <path d="M3.500 2.500h6v7h-6z" fill="#fff" stroke="#5f636d" />
              <path d="M5 4.500h3M5 6.500h3" stroke="#7b7f88" />
            </svg>
          </button>
          <button aria-label="Page break view" className="flex w-[18px] items-center justify-center">
            <svg width="13" height="12" viewBox="0 0 13 12" shapeRendering="crispEdges">
              <path d="M.5 .5h12v11H.5z" fill="#a4a7ae" stroke="#5f636d" />
              <path d="M1 1h3v7H1zM5 1h3v7H5z" fill="#fff" />
              <path d="M4.500 1v7M8.500 1v7M1 8.500h8" stroke="#5f636d" />
            </svg>
          </button>
        </div>
        <span className="pl-2 font-['Liberation_Sans',sans-serif]">100%</span>
        <div className="flex flex-1 items-center justify-end">
          <ZoomButton label="Zoom out" d="M5.500 9h7" />
          <div className="relative h-[14px] w-[100px]">
            <svg width="100" height="14" viewBox="0 0 100 14">
              <path d="M0 7.500h100" stroke="#3f62a0" />
              <path d="M0 8.500h100" stroke="#cfdff5" />
              <path d="M45.500 .5h8v8l-4 4-4-4z" fill="#e9f1fb" stroke="#3d5f98" />
              <path d="M49.500 3v6" stroke="#6b86b8" />
            </svg>
            <input
              type="range"
              min="10"
              max="190"
              defaultValue="100"
              aria-label="Zoom"
              className="absolute inset-0 w-full opacity-0"
            />
          </div>
          <ZoomButton label="Zoom in" d="M5.500 9h7M9 5.500v7" />
        </div>
      </div>
    </footer>
  );
}

export default function App() {
  return (
    <div className={`${UI} relative w-full overflow-hidden bg-[#bfd3ec]`}>
      <Ribbon />
      <FormulaBar />
      <Sheet />
      <div className="relative">
        <TabBar />
        <aside className="pointer-events-none absolute right-[54px] bottom-3 w-[255px] whitespace-nowrap text-[#b4b4b4]">
          <p className="text-xl leading-6 font-light">Activate Windows</p>
          <p className="text-[15px] leading-5 font-light">Go to PC settings to activate Windows.</p>
        </aside>
      </div>
      <StatusBar />
    </div>
  );
}
